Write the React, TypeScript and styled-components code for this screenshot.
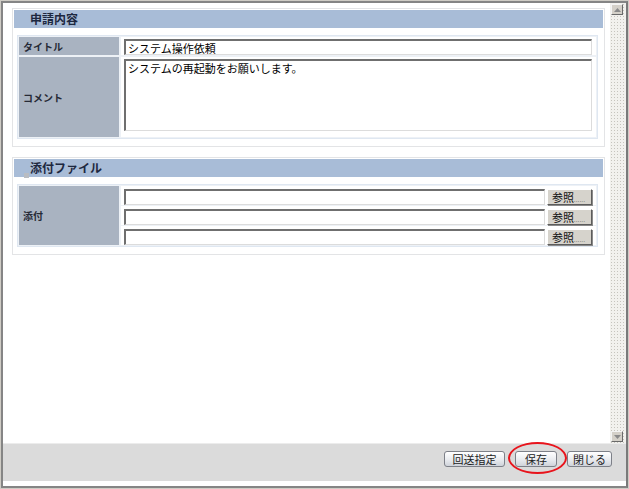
import styled, { createGlobalStyle } from "styled-components";

const GlobalStyle = createGlobalStyle`
  html, body {
    margin: 0;
    padding: 0;
    background: #ffffff;
  }
  body {
    font-family: "Noto Sans CJK JP", "Liberation Sans", sans-serif;
  }
  * {
    box-sizing: border-box;
  }
`;

const Window = styled.div`
  width: 629px;
  height: 489px;
  border: 1px solid #cfccc5;
  background: #ffffff;
`;

const Shell = styled.div`
  height: 100%;
  display: flex;
  flex-direction: column;
  border: 2px solid #858585;
  border-right-color: #7a7a7a;
  padding-bottom: 3px;
  background: #ffffff;
`;

const Main = styled.div`
  flex: 1;
  display: flex;
  min-height: 0;
`;

const Content = styled.div`
  flex: 1;
  padding: 5px 5px 0 7px;
  border-left: 2px solid #ffffff;
`;

const Panel = styled.section`
  border: 1px solid #e3e4e6;
  padding: 1px;
  margin-bottom: 10px;
  background: #ffffff;
`;

const PanelHeader = styled.div`
  position: relative;
  height: 18px;
  line-height: 18px;
  padding-left: 16px;
  background: #a8bcd7;
  color: #1d2840;
  font-size: 12px;
  font-weight: bold;
`;

const Bullet = styled.span`
  position: absolute;
  left: 10px;
  bottom: -1px;
  width: 5px;
  height: 5px;
  background: #b9bcc2;
`;

const Table = styled.div`
  display: grid;
  grid-template-columns: 100px 1fr;
  gap: 2px;
  margin: 7px 5px 6px 3px;
  padding: 1px;
  border: 1px solid #dfe7f1;
  background: #edf1f6;
`;

const Label = styled.div<{ $span?: number }>`
  display: flex;
  align-items: center;
  padding-left: 4px;
  background: #a9b3c1;
  color: #262a36;
  font-size: 10px;
  font-weight: bold;
  grid-row: span ${({ $span }) => $span ?? 1};
`;

const Cell = styled.div<{ $bottom?: number }>`
  background: #ffffff;
  padding: 2px 4px ${({ $bottom }) => $bottom ?? 0}px 3px;
`;

const TextInput = styled.input`
  display: block;
  width: 100%;
  height: 16px;
  margin: 0;
  padding: 0 2px;
  border: 1px solid #dcdcdc;
  border-top: 2px solid #6f6f6f;
  border-left: 2px solid #6f6f6f;
  font-family: inherit;
  font-size: 11px;
  line-height: 13px;
  color: #000;
  background: #fff;
  outline: none;
`;

const TextArea = styled.textarea`
  display: block;
  width: 100%;
  height: 72px;
  margin: 0;
  padding: 0 2px;
  resize: none;
  border: 1px solid #dcdcdc;
  border-top: 2px solid #6f6f6f;
  border-left: 2px solid #6f6f6f;
  font-family: inherit;
  font-size: 11px;
  line-height: 14px;
  color: #000;
  background: #fff;
  outline: none;
  overflow: hidden;
`;

const FileList = styled.div`
  display: flex;
  flex-direction: column;
  gap: 1px;
`;

const FileRow = styled.div`
  display: flex;
  align-items: flex-start;
  gap: 2px;
  height: 19px;
  padding: 3px 4px 0 3px;
  background: #ffffff;
`;

const BrowseButton = styled.button`
  flex: 0 0 45px;
  height: 16px;
  margin: 0;
  padding: 0 0 0 4px;
  display: flex;
  align-items: center;
  border: 1px solid;
  border-color: #ffffff #5c5c5c #5c5c5c #ffffff;
  box-shadow: 1px 1px 0 #8a8a8a;
  background: #d6d3cc;
  font-family: inherit;
  font-size: 11px;
  line-height: 14px;
  color: #111;
  small {
    font-size: 5px;
    letter-spacing: 0.5px;
    margin-top: 6px;
    color: #555;
  }
`;

const Scrollbar = styled.div`
  flex: 0 0 16px;
  display: flex;
  flex-direction: column;
  justify-content: space-between;
  padding: 1px 2px 1px 1px;
  background-color: #f2f1ed;
  background-image: radial-gradient(#c6c4bd 0.7px, transparent 0.9px);
  background-size: 3px 3px;
`;

const ArrowButton = styled.div`
  width: 12px;
  height: 11px;
  display: flex;
  align-items: center;
  justify-content: center;
  background: #d4d0c8;
  border: 1px solid;
  border-color: #f4f4f4 #6a6a6a #6a6a6a #f4f4f4;
`;

const Footer = styled.div`
  height: 40px;
  display: flex;
  justify-content: flex-end;
  align-items: flex-start;
  gap: 10px;
  padding: 7px 14px 0 0;
  background: #dbdbdb;
  border-top: 1px solid #ececec;
  border-bottom: 2px solid #ffffff;
`;

const ActionWrap = styled.div`
  position: relative;
  display: flex;
`;

const ActionButton = styled.button<{ $w: number }>`
  width: ${({ $w }) => $w}px;
  height: 16px;
  margin: 0;
  padding: 0;
  display: flex;
  align-items: center;
  justify-content: center;
  border: 1px solid #7d8088;
  border-radius: 3px;
  background: linear-gradient(#ffffff, #e9ebef 55%, #cfd3da);
  font-family: inherit;
  font-size: 11px;
  line-height: 14px;
  color: #222;
`;

const Highlight = styled.span`
  position: absolute;
  left: -7px;
  top: -9px;
  width: 59px;
  height: 32px;
  border: 2px solid #e8141c;
  border-radius: 50%;
  pointer-events: none;
`;

const Arrow = ({ up }: { up?: boolean }) => (
  <svg width="7" height="4" viewBox="0 0 7 4">
    <path d={up ? "M0 4 L3.5 0 L7 4 Z" : "M0 0 L3.5 4 L7 0 Z"} fill="#8a8a8a" />
  </svg>
);

export default function App() {
  return (
    <>
      <GlobalStyle />
      <Window>
        <Shell>
          <Main>
            <Content>
              <Panel>
                <PanelHeader>申請内容</PanelHeader>
                <Table>
                  <Label>タイトル</Label>
                  <Cell>
                    <TextInput defaultValue="システム操作依頼" />
                  </Cell>
                  <Label>コメント</Label>
                  <Cell $bottom={6}>
                    <TextArea defaultValue="システムの再起動をお願いします。" />
                  </Cell>
                </Table>
              </Panel>
              <Panel>
                <PanelHeader>
                  <Bullet />
                  添付ファイル
                </PanelHeader>
                <Table>
                  <Label>添付</Label>
                  <FileList>
                    {[0, 1, 2].map((i) => (
                      <FileRow key={i}>
                        <TextInput />
                        <BrowseButton>
                          参照<small>......</small>
                        </BrowseButton>
                      </FileRow>
                    ))}
                  </FileList>
                </Table>
              </Panel>
            </Content>
            <Scrollbar>
              <ArrowButton>
                <Arrow up />
              </ArrowButton>
              <ArrowButton>
                <Arrow />
              </ArrowButton>
            </Scrollbar>
          </Main>
          <Footer>
            <ActionButton $w={61}>回送指定</ActionButton>
            <ActionWrap>
              <ActionButton $w={42}>保存</ActionButton>
              <Highlight />
            </ActionWrap>
            <ActionButton $w={45}>閉じる</ActionButton>
          </Footer>
        </Shell>
      </Window>
    </>
  );
}
